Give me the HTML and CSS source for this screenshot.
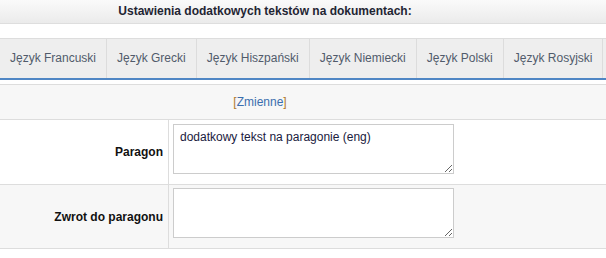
FILE: index.html
```html
<!DOCTYPE html>
<html lang="pl">
<head>
  <meta charset="UTF-8" />
  <title>Ustawienia dodatkowych tekstów</title>
  <link rel="stylesheet" href="styles.css">
</head>
<body>

  <div class="title">Ustawienia dodatkowych tekstów na dokumentach:</div>

  <div class="tabs">
    <span class="tab">Język Francuski</span>
    <span class="tab">Język Grecki</span>
    <span class="tab">Język Hiszpański</span>
    <span class="tab">Język Niemiecki</span>
    <span class="tab">Język Polski</span>
    <span class="tab">Język Rosyjski</span>
  </div>

  <table class="form">
    <tr class="alt">
      <td colspan="2" class="vars"><span class="br">[</span><a href="#">Zmienne</a><span class="br">]</span></td>
    </tr>
    <tr>
      <td class="label">Paragon</td>
      <td class="field"><textarea>dodatkowy tekst na paragonie (eng)</textarea></td>
    </tr>
    <tr class="alt">
      <td class="label">Zwrot do paragonu</td>
      <td class="field"><textarea></textarea></td>
    </tr>
  </table>

</body>
</html>
```

FILE: styles.css
```css
body {
  margin: 0;
  font-family: "Liberation Sans", Arial, sans-serif;
  font-size: 12px;
  color: #222;
  background: #fff;
  overflow: hidden;
}
.title {
  height: 23px;
  line-height: 23px;
  padding-right: 76px;
  text-align: center;
  font-weight: bold;
  color: #1f2533;
  background: linear-gradient(to bottom, #fafafa, #ebebeb);
  border-bottom: 1px solid #dedede;
}
.tabs {
  display: flex;
  margin-top: 14px;
  margin-bottom: 4px;
  white-space: nowrap;
  background: #eee;
  border-top: 1px solid #ddd;
  border-bottom: 2px solid #4f86c4;
}
.tab {
  flex: none;
  padding: 0 10px;
  line-height: 39px;
  color: #515b6b;
  border-right: 1px solid #dcdcdc;
}
.form {
  width: 100%;
  border-collapse: collapse;
}
.form td {
  border-top: 1px solid #ddd;
  border-bottom: 1px solid #ddd;
  padding: 0;
}
.alt td {
  background: #f7f7f7;
}
.vars {
  height: 34px;
  text-align: center;
  padding-right: 86px !important;
}
.vars a {
  color: #3b6eae;
  text-decoration: none;
}
.vars .br {
  color: #b07a2c;
}
.label {
  width: 163px;
  padding-right: 5px !important;
  text-align: right;
  font-weight: bold;
  color: #111;
  border-right: 1px solid #ddd;
  vertical-align: middle;
}
.field {
  padding: 4px 4px 10px 4px !important;
  vertical-align: top;
}
.alt .field {
  padding-top: 3px !important;
}
textarea {
  display: block;
  box-sizing: border-box;
  width: 281px;
  height: 50px;
  margin: 0;
  padding: 5px 6px;
  font-family: "Liberation Sans", Arial, sans-serif;
  font-size: 12px;
  line-height: 15px;
  color: #1a2040;
  background: #fff;
  border: 1px solid #ccc;
}
```
